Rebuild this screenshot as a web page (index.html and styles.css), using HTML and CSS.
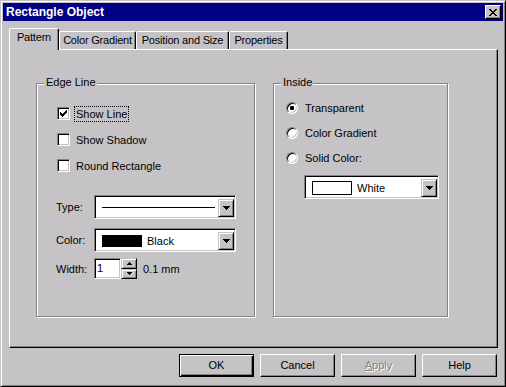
FILE: index.html
```html
<!DOCTYPE html>
<html lang="en">
<head>
  <meta charset="UTF-8">
  <title>Rectangle Object</title>
  <link rel="stylesheet" href="styles.css">
</head>
<body>
  <div class="window">
    <div class="titlebar">
      <span class="title">Rectangle Object</span>
      <span class="close-btn">
        <svg width="8" height="7" viewBox="0 0 8 7" shape-rendering="crispEdges"><path d="M0 0h2v1h-2z M6 0h2v1h-2z M1 1h2v1h-2z M5 1h2v1h-2z M2 2h4v1h-4z M3 3h2v1h-2z M2 4h4v1h-4z M1 5h2v1h-2z M5 5h2v1h-2z M0 6h2v1h-2z M6 6h2v1h-2z" fill="#000"/></svg>
      </span>
    </div>

    <!-- tab strip -->
    <div class="tabs">
      <div class="tab tab-active tab-pattern">Pattern</div>
      <div class="tab tab-gradient">Color Gradient</div>
      <div class="tab tab-position">Position and Size</div>
      <div class="tab tab-properties">Properties</div>
    </div>

    <div class="panel">
      <div class="group group-edge">
        <span class="group-title">Edge Line</span>
        <div class="checks">
          <div class="check">
            <span class="box"><svg width="7" height="7" viewBox="0 0 7 7" shape-rendering="crispEdges"><path d="M6 0h1v1h-1z M5 1h2v1h-2z M0 2h1v1h-1z M4 2h3v1h-3z M0 3h2v1h-2z M3 3h3v1h-3z M0 4h5v1h-5z M1 5h3v1h-3z M2 6h1v1h-1z" fill="#000"/></svg></span>
            <span class="check-label focus">Show Line</span>
          </div>
          <div class="check">
            <span class="box"></span>
            <span class="check-label">Show Shadow</span>
          </div>
          <div class="check">
            <span class="box"></span>
            <span class="check-label">Round Rectangle</span>
          </div>
        </div>

        <div class="field field-type">
          <span class="field-label">Type:</span>
          <div class="combo combo-wide">
            <div class="combo-value"><span class="line-sample"></span></div>
            <span class="drop"><svg width="7" height="4" viewBox="0 0 7 4" shape-rendering="crispEdges"><path d="M0 0h7v1h-1v1h-1v1h-1v1h-1v-1h-1v-1h-1v-1h-1z" fill="#000"/></svg></span>
          </div>
        </div>

        <div class="field field-color">
          <span class="field-label">Color:</span>
          <div class="combo combo-wide">
            <div class="combo-value"><span class="swatch swatch-black"></span>Black</div>
            <span class="drop"><svg width="7" height="4" viewBox="0 0 7 4" shape-rendering="crispEdges"><path d="M0 0h7v1h-1v1h-1v1h-1v1h-1v-1h-1v-1h-1v-1h-1z" fill="#000"/></svg></span>
          </div>
        </div>

        <div class="field field-width">
          <span class="field-label">Width:</span>
          <div class="edit">1</div>
          <div class="spin">
            <span class="spin-btn"><svg width="5" height="3" viewBox="0 0 5 3" shape-rendering="crispEdges"><path d="M2 0h1v1h1v1h1v1h-5v-1h1v-1h1z" fill="#000"/></svg></span>
            <span class="spin-btn"><svg width="5" height="3" viewBox="0 0 5 3" shape-rendering="crispEdges"><path d="M0 0h5v1h-1v1h-1v1h-1v-1h-1v-1h-1z" fill="#000"/></svg></span>
          </div>
          <span class="unit">0.1 mm</span>
        </div>
      </div>

      <div class="group group-inside">
        <span class="group-title">Inside</span>
        <div class="radios">
          <div class="radio-row">
            <span class="radio"><span class="radio-dot"></span></span>
            <span>Transparent</span>
          </div>
          <div class="radio-row">
            <span class="radio"></span>
            <span>Color Gradient</span>
          </div>
          <div class="radio-row">
            <span class="radio"></span>
            <span>Solid Color:</span>
          </div>
        </div>
        <div class="combo combo-fill">
          <div class="combo-value"><span class="swatch swatch-white"></span>White</div>
          <span class="drop"><svg width="7" height="4" viewBox="0 0 7 4" shape-rendering="crispEdges"><path d="M0 0h7v1h-1v1h-1v1h-1v1h-1v-1h-1v-1h-1v-1h-1z" fill="#000"/></svg></span>
        </div>
      </div>
    </div>

    <div class="buttons">
      <button class="btn btn-default">OK</button>
      <button class="btn">Cancel</button>
      <button class="btn btn-disabled"><u>A</u>pply</button>
      <button class="btn">Help</button>
    </div>
  </div>
</body>
</html>
```

FILE: styles.css
```css
body {
  margin: 0;
  font-family: "Liberation Sans", Arial, sans-serif;
  font-size: 11px;
  color: #000;
}
.window {
  box-sizing: border-box;
  width: 506px;
  height: 387px;
  padding: 2px;
  background: #c6c3c6;
  border: 1px solid;
  border-color: #c6c3c6 #000 #000 #c6c3c6;
  box-shadow: inset 1px 1px #fff, inset -1px -1px #848284;
}

/* title bar */
.titlebar {
  height: 18px;
  background: #000084;
  display: flex;
  align-items: center;
  justify-content: space-between;
  padding: 0 2px 0 3px;
}
.title {
  color: #fff;
  font-weight: bold;
  font-size: 12px;
  line-height: 18px;
}
.close-btn {
  box-sizing: border-box;
  width: 16px;
  height: 14px;
  background: #c6c3c6;
  border: 1px solid;
  border-color: #fff #000 #000 #fff;
  box-shadow: inset -1px -1px #848284;
  display: flex;
  align-items: center;
  justify-content: center;
}
.close-btn svg {
  display: block;
}

/* tabs */
.tabs {
  display: flex;
  align-items: flex-end;
  height: 21px;
  margin: 7px 0 0 6px;
}
.tab {
  box-sizing: border-box;
  height: 18px;
  border: 1px solid;
  border-bottom: 0;
  border-color: #fff #000 transparent #fff;
  border-radius: 2px 2px 0 0;
  box-shadow: inset -1px 0 #848284;
  padding-top: 2px;
  line-height: 13px;
  text-align: center;
  letter-spacing: -0.2px;
  background: #c6c3c6;
}
.tab-active {
  height: 22px;
  margin-bottom: -1px;
  position: relative;
  z-index: 1;
}
.tab-pattern { width: 50px; }
.tab-gradient { width: 77px; }
.tab-position { width: 93px; }
.tab-properties { width: 59px; }

.panel {
  box-sizing: border-box;
  width: 489px;
  height: 299px;
  margin-left: 6px;
  border: 1px solid;
  border-color: #fff #000 #000 #fff;
  box-shadow: inset -1px -1px #848284;
  padding: 33px 0 0 26px;
  display: flex;
  gap: 18px;
  align-items: flex-start;
}

/* group boxes */
.group {
  box-sizing: border-box;
  height: 234px;
  border: 1px solid #848284;
  box-shadow: inset 1px 1px #fff, 1px 1px #fff;
  position: relative;
}
.group-edge {
  width: 219px;
  padding: 23px 0 0 20px;
}
.group-inside {
  width: 175px;
  padding: 17px 0 0 12px;
}
.group-title {
  position: absolute;
  top: -8px;
  left: 7px;
  padding: 0 1px 0 2px;
  background: #c6c3c6;
  line-height: 13px;
}

/* checkboxes */
.checks {
  display: flex;
  flex-direction: column;
  gap: 13px;
}
.check {
  display: flex;
  align-items: center;
  height: 13px;
  gap: 4px;
}
.box {
  box-sizing: border-box;
  width: 13px;
  height: 13px;
  background: #fff;
  border: 1px solid;
  border-color: #848284 #fff #fff #848284;
  box-shadow: inset 1px 1px #000, inset -1px -1px #c6c3c6;
}
.box svg {
  display: block;
  margin: 2px 0 0 2px;
}
.check-label {
  padding: 0 1px;
  border: 1px solid transparent;
  line-height: 14px;
}
.focus {
  border: 1px dotted #000;
}

/* label + control rows */
.field {
  display: flex;
  align-items: center;
  margin-left: -1px;
}
.field-label {
  width: 38px;
}
.field-type { margin-top: 23px; }
.field-color { margin-top: 9px; }
.field-width { margin-top: 6px; }

.combo {
  box-sizing: border-box;
  height: 24px;
  background: #fff;
  border: 1px solid;
  border-color: #848284 #fff #fff #848284;
  box-shadow: inset 1px 1px #000, inset -1px -1px #c6c3c6;
  display: flex;
  align-items: center;
  padding: 2px 1px 1px 2px;
}
.combo-wide { width: 142px; }
.combo-fill {
  width: 135px;
  margin: 11px 0 0 18px;
}
.combo-value {
  flex: 1;
  display: flex;
  align-items: center;
  padding-left: 5px;
}
.line-sample {
  width: 113px;
  height: 1px;
  background: #000;
}
.swatch {
  box-sizing: border-box;
  width: 40px;
  height: 12px;
  margin-right: 5px;
  border: 1px solid #000;
}
.swatch-black { background: #000; }
.swatch-white {
  background: #fff;
  height: 14px;
}
.drop {
  box-sizing: border-box;
  width: 16px;
  height: 18px;
  background: #c6c3c6;
  border: 1px solid;
  border-color: #c6c3c6 #000 #000 #c6c3c6;
  box-shadow: inset 1px 1px #fff, inset -1px -1px #848284;
  display: flex;
  align-items: center;
  justify-content: center;
}
.drop svg,
.spin-btn svg {
  display: block;
}

.edit {
  box-sizing: border-box;
  width: 27px;
  height: 21px;
  background: #fff;
  border: 1px solid;
  border-color: #848284 #fff #fff #848284;
  box-shadow: inset 1px 1px #000, inset -1px -1px #c6c3c6;
  padding-left: 2px;
  line-height: 19px;
}
.spin {
  display: flex;
  flex-direction: column;
  width: 16px;
  height: 21px;
}
.spin-btn {
  box-sizing: border-box;
  flex: 1;
  background: #c6c3c6;
  border: 1px solid;
  border-color: #c6c3c6 #000 #000 #c6c3c6;
  box-shadow: inset 1px 1px #fff, inset -1px -1px #848284;
  display: flex;
  align-items: center;
  justify-content: center;
}
.unit {
  margin-left: 6px;
}

/* radio buttons */
.radios {
  display: flex;
  flex-direction: column;
  gap: 12px;
}
.radio-row {
  display: flex;
  align-items: center;
  height: 13px;
  gap: 7px;
}
.radio {
  box-sizing: border-box;
  width: 12px;
  height: 12px;
  border-radius: 50%;
  background: #fff;
  border: 1px solid;
  border-color: #848284 #fff #fff #848284;
  box-shadow: inset 1px 1px #000, inset -1px -1px #c6c3c6;
  display: flex;
  align-items: center;
  justify-content: center;
}
.radio-dot {
  width: 4px;
  height: 4px;
  border-radius: 1px;
  background: #000;
}

/* dialog buttons */
.buttons {
  display: flex;
  justify-content: flex-end;
  gap: 6px;
  margin: 6px 6px 0 0;
}
.btn {
  box-sizing: border-box;
  width: 75px;
  height: 23px;
  padding: 0;
  font: inherit;
  color: #000;
  line-height: 21px;
  text-align: center;
  background: #c6c3c6;
  border: 1px solid;
  border-color: #fff #000 #000 #fff;
  box-shadow: inset -1px -1px #848284;
}
.btn-default {
  border-color: #000;
  box-shadow: inset 1px 1px #fff, inset -1px -1px #000, inset -2px -2px #848284;
}
.btn-disabled {
  color: #848284;
  text-shadow: 1px 1px #fff;
}
```
